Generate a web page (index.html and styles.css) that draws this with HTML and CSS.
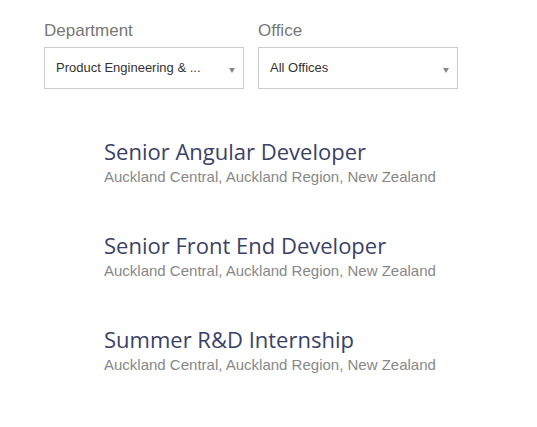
FILE: index.html
```html
<!DOCTYPE html>
<html lang="en">
<head>
  <meta charset="UTF-8">
  <meta name="viewport" content="width=device-width,initial-scale=1">
  <title>Careers</title>
  <link rel="stylesheet" href="styles.css">
</head>
<body>

  <form class="filters">
    <div class="filter">
      <label for="department">Department</label>
      <div class="select">
        <span class="value">Product Engineering &amp; ...</span>
        <span class="arrow"></span>
      </div>
    </div>
    <div class="filter">
      <label for="office">Office</label>
      <div class="select">
        <span class="value">All Offices</span>
        <span class="arrow"></span>
      </div>
    </div>
  </form>

  <ul class="jobs">
    <li>
      <a href="#">Senior Angular Developer</a>
      <span class="location">Auckland Central, Auckland Region, New Zealand</span>
    </li>
    <li>
      <a href="#">Senior Front End Developer</a>
      <span class="location">Auckland Central, Auckland Region, New Zealand</span>
    </li>
    <li>
      <a href="#">Summer R&amp;D Internship</a>
      <span class="location">Auckland Central, Auckland Region, New Zealand</span>
    </li>
  </ul>

</body>
</html>
```

FILE: styles.css
```css
body { font-family: "Liberation Sans", Arial, sans-serif; margin:0; padding:20px 0 0 44px; background:#fff; color:#333; }
.filters { display:flex; gap:14px; }
.filter { display:flex; flex-direction:column; width:200px; }
.filter label { font-size:17px; color:#777; line-height:22px; margin-bottom:5px; }
.select { display:flex; align-items:center; justify-content:space-between; height:40px; border:1px solid #ccc; padding:0 8px 0 11px; }
.select .value { font-size:13px; color:#333; margin-top:-2px; }
.arrow { width:0; height:0; border-left:3px solid transparent; border-right:3px solid transparent; border-top:5px solid #888; margin-top:4px; }
.jobs { list-style:none; margin:47px 0 0 60px; padding:0; }
.jobs li { display:flex; flex-direction:column; margin-bottom:43px; }
.jobs a { font-family:"Open Sans", sans-serif; font-size:22px; color:#3b4266; text-decoration:none; line-height:30px; }
.jobs .location { font-size:15px; color:#888; line-height:20px; margin-top:1px; }
```
